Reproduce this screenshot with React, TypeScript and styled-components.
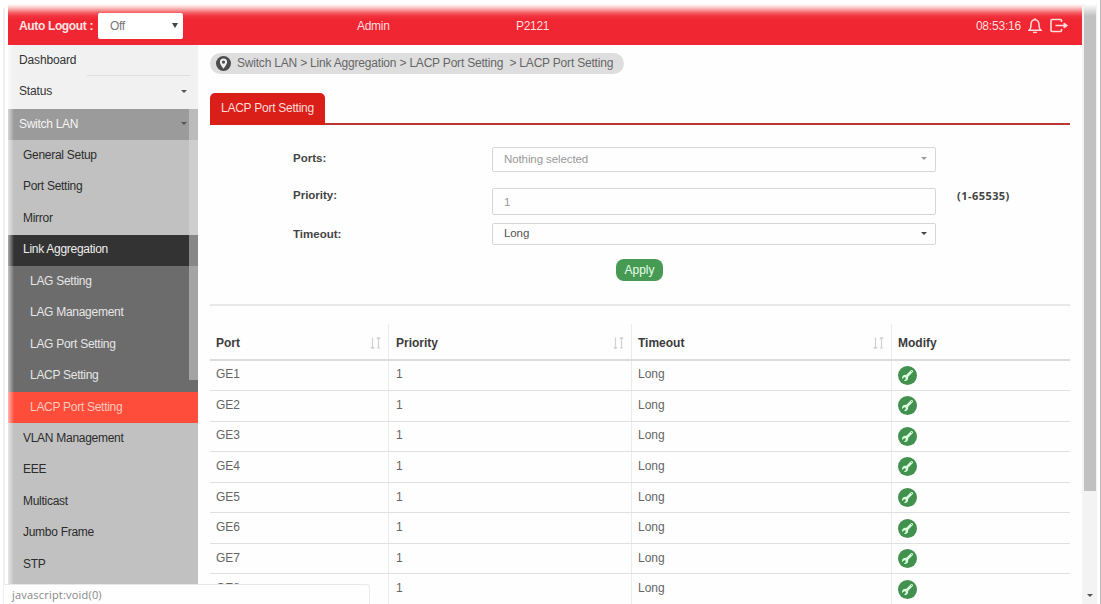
import React from 'react';
import styled, { createGlobalStyle } from 'styled-components';
import { FaWrench } from 'react-icons/fa';

const Global = createGlobalStyle`
  *, *::before, *::after { box-sizing: border-box; }
  html, body { margin: 0; padding: 0; background: #fefefe; overflow: hidden; }
  body { font-family: "Liberation Sans", Arial, sans-serif; font-size: 12.5px; color: #444; }
`;

const Page = styled.div`
  position: relative;
  display: flex;
  width: 1101px;
  height: 604px;
  padding: 4px 0 0 8px;
  overflow: hidden;
  border-right: 1px solid #bdbdbd;
`;

const Console = styled.div`
  display: flex;
  flex-direction: column;
  width: 1074px;
  flex: none;
`;

const Header = styled.header`
  display: grid;
  grid-template-columns: 338px 159px 1fr auto;
  align-items: center;
  height: 41px;
  flex: none;
  padding: 2px 13px 0 11px;
  color: #ffdede;
  background: linear-gradient(#fff 0, #fdd3d3 3px, #f9999c 6px, #f45b61 9px, #f1343f 12px, #f02632 16px, #f02632 100%);
`;

const Logout = styled.div`
  display: flex;
  align-items: center;
  font-weight: bold;
  font-size: 12px;
  letter-spacing: -0.35px;
  color: #ffe4e2;
`;

const HeaderText = styled.span<{ $spacing?: string }>`
  font-size: 12px;
  letter-spacing: ${(p) => p.$spacing ?? '-0.3px'};
`;

const OffSelect = styled.div`
  display: flex;
  align-items: center;
  justify-content: space-between;
  width: 85px;
  height: 26px;
  margin-left: 5px;
  padding: 0 5px 0 12px;
  border-radius: 2px;
  background: #fff;
  color: #777;
  font-weight: normal;
`;

const Caret = styled.i<{ $size: number; $color: string }>`
  width: 0;
  height: 0;
  border-left: ${(p) => p.$size}px solid transparent;
  border-right: ${(p) => p.$size}px solid transparent;
  border-top: ${(p) => p.$size + (p.$size > 3 ? 2 : 0)}px solid ${(p) => p.$color};
`;

const HeaderTools = styled.div`
  display: flex;
  align-items: center;
  gap: 7px;
`;

const Body = styled.div`
  display: flex;
  flex: 1;
  min-height: 0;
`;

const Sidebar = styled.nav`
  position: relative;
  width: 190px;
  flex: none;
  overflow: hidden;
  background: #c1c1c1;
`;

type Tone = 'top' | 'section' | 'item' | 'open' | 'child' | 'active';

const tones: Record<Tone, { bg: string; fg: string; indent: number }> = {
  top: { bg: '#f1f1f1', fg: '#333', indent: 11 },
  section: { bg: '#9b9b9b', fg: '#f4f4f4', indent: 11 },
  item: { bg: '#c1c1c1', fg: '#2c2c2c', indent: 15 },
  open: { bg: '#333333', fg: '#efefef', indent: 15 },
  child: { bg: '#6c6c6c', fg: '#e6e6e6', indent: 22 },
  active: { bg: '#ff4d3b', fg: '#ffc9bd', indent: 22 },
};

const NavRow = styled.div<{ $tone: Tone }>`
  display: flex;
  align-items: center;
  justify-content: space-between;
  height: 31.45px;
  padding: 0 11px 2px ${(p) => tones[p.$tone].indent}px;
  background: ${(p) => tones[p.$tone].bg};
  color: ${(p) => tones[p.$tone].fg};
  font-size: 12px;
  letter-spacing: ${(p) => (p.$tone === 'top' ? '-0.15px' : '-0.28px')};
  white-space: nowrap;
`;

const NavTop = styled.div`
  padding-bottom: 1px;
  background: #f1f1f1;
`;

const NavDivider = styled.div`
  height: 1px;
  margin: -1px 8px 0 79px;
  background: #dedede;
`;

const NavScroll = styled.div`
  position: absolute;
  top: 64px;
  right: 0;
  width: 9px;
  height: 271px;
  background: rgba(220, 220, 220, 0.5);
`;

const LeftFade = styled.div`
  position: absolute;
  top: 0;
  left: 0;
  width: 6px;
  height: 100%;
  background: linear-gradient(90deg, rgba(255, 255, 255, 0.6), rgba(255, 255, 255, 0));
`;

const Main = styled.main`
  flex: 1;
  min-width: 0;
  padding: 8px 12px 0;
  overflow: hidden;
`;

const Breadcrumb = styled.div`
  display: flex;
  align-items: center;
  width: 414px;
  height: 21px;
  padding: 0 6px 1px;
  border-radius: 11px;
  background: #dedede;
  color: #666;
  font-size: 12px;
  letter-spacing: -0.2px;
  white-space: pre;
`;

const PinIcon = styled.svg`
  width: 15px;
  height: 15px;
  margin-right: 6px;
  flex: none;
`;

const TabBar = styled.div`
  display: flex;
  height: 32px;
  margin-top: 19px;
  border-bottom: 2px solid #bd3534;
`;

const Tab = styled.div`
  display: flex;
  align-items: center;
  width: 115px;
  height: 32px;
  padding: 0 0 3px 11px;
  border-radius: 5px 5px 0 0;
  background: #da1f18;
  color: #ffdcd8;
  font-size: 12px;
  letter-spacing: -0.25px;
  white-space: nowrap;
`;

const Form = styled.div`
  padding: 22px 0 0 83px;
`;

const Field = styled.div<{ $gap: number }>`
  display: grid;
  grid-template-columns: 199px 444px auto;
  align-items: start;
  margin-bottom: ${(p) => p.$gap}px;
`;

const Label = styled.label<{ $top: number }>`
  padding-top: ${(p) => p.$top}px;
  color: #444;
  font-weight: bold;
  font-size: 11.5px;
  line-height: 14px;
`;

const Control = styled.div<{ $h: number; $muted?: boolean; $drop?: number }>`
  display: flex;
  align-items: center;
  justify-content: space-between;
  height: ${(p) => p.$h}px;
  padding: ${(p) => p.$drop ?? 0}px 8px ${(p) => (p.$drop ? 0 : 2)}px 11px;
  border: 1px solid #d6d6d6;
  border-radius: 2px;
  color: ${(p) => (p.$muted ? '#999' : '#555')};
  font-size: 11.5px;
  letter-spacing: -0.1px;
`;

const Range = styled.span`
  padding: 1px 0 0 21px;
  color: #444;
  font-family: "Open Sans", sans-serif;
  font-weight: bold;
  font-size: 11px;
  line-height: 14px;
  letter-spacing: 0.45px;
`;

const Apply = styled.button`
  display: block;
  width: 47px;
  height: 22px;
  margin: 14px 0 0 323px;
  padding: 0 0 1px;
  border: 0;
  border-radius: 8px;
  background: #479a53;
  color: #e8ffe8;
  font: 12px "Liberation Sans", Arial, sans-serif;
`;

const Rule = styled.hr`
  height: 2px;
  margin: 23px 0 18px;
  border: 0;
  background: #e8e8e8;
`;

const Row = styled.div<{ $head?: boolean }>`
  display: grid;
  grid-template-columns: 179px 243px 260px 1fr;
  height: ${(p) => (p.$head ? '36.5px' : '30.57px')};
  border-bottom: ${(p) => (p.$head ? '2px solid #dcdcdc' : '1px solid #e0e0e0')};
`;

const Cell = styled.div<{ $head?: boolean }>`
  display: flex;
  align-items: center;
  justify-content: space-between;
  padding: ${(p) => (p.$head ? '3px 7px 0 6px' : '0 7px 2px 6px')};
  border-right: 1px solid #ebebeb;
  color: ${(p) => (p.$head ? '#3c3c3c' : '#666')};
  font-weight: ${(p) => (p.$head ? 'bold' : 'normal')};
  font-size: 12px;
  &:nth-child(2) { padding-left: 7px; }
  &:last-child { border-right: 0; padding-bottom: 0; }
`;

const EditButton = styled.span`
  display: flex;
  align-items: center;
  justify-content: center;
  width: 19px;
  height: 19px;
  border-radius: 50%;
  background: #43914f;
  color: #d9ffdf;
`;

const Wrench = styled(FaWrench)`
  transform: rotate(180deg);
`;

const ScrollTrack = styled.div`
  display: flex;
  flex-direction: column;
  align-items: center;
  justify-content: space-between;
  width: 15px;
  flex: none;
  padding: 0 1px 7px 2px;
  background: #f3f3f3;
`;

const ScrollThumb = styled.div`
  width: 12px;
  height: 487px;
  background: linear-gradient(#fff, #c1c1c1 12px);
`;

const StatusBar = styled.div`
  position: absolute;
  left: 4px;
  bottom: 0;
  width: 366px;
  height: 20px;
  padding: 3px 0 0 8px;
  border: solid #e9e9e9;
  border-width: 1px 1px 0 0;
  border-radius: 0 4px 0 0;
  background: #fefefe;
  color: #888;
  font: 11px/14px "Open Sans", sans-serif;
  letter-spacing: 0.2px;
`;

const FrameLine = styled.div`
  position: absolute;
  left: 3px;
  top: 8px;
  bottom: 0;
  width: 2px;
  background: #efefef;
`;

const SortIcon = () => (
  <svg width="11" height="12" viewBox="0 0 11 12" fill="none" stroke="#d2d2d2" strokeWidth="1.2">
    <path d="M2.5 0.5v11M0.8 10.2l1.7 1.500 1.700-1.500M8.500 11.500v-11M6.800 1.800l1.700-1.500 1.700 1.500M7 11h3" />
  </svg>
);

const nav: { label: string; tone: Tone }[] = [
  { label: 'Switch LAN', tone: 'section' },
  { label: 'General Setup', tone: 'item' },
  { label: 'Port Setting', tone: 'item' },
  { label: 'Mirror', tone: 'item' },
  { label: 'Link Aggregation', tone: 'open' },
  { label: 'LAG Setting', tone: 'child' },
  { label: 'LAG Management', tone: 'child' },
  { label: 'LAG Port Setting', tone: 'child' },
  { label: 'LACP Setting', tone: 'child' },
  { label: 'LACP Port Setting', tone: 'active' },
  { label: 'VLAN Management', tone: 'item' },
  { label: 'EEE', tone: 'item' },
  { label: 'Multicast', tone: 'item' },
  { label: 'Jumbo Frame', tone: 'item' },
  { label: 'STP', tone: 'item' },
];

const ports = ['GE1', 'GE2', 'GE3', 'GE4', 'GE5', 'GE6', 'GE7', 'GE8'];
const columns = ['Port', 'Priority', 'Timeout', 'Modify'];

export default function App() {
  return (
    <>
      <Global />
      <Page>
        <Console>
          <Header>
            <Logout>
              Auto Logout :
              <OffSelect>
                Off
                <Caret $size={3.5} $color="#444" />
              </OffSelect>
            </Logout>
            <HeaderText>Admin</HeaderText>
            <HeaderText>P2121</HeaderText>
            <HeaderTools>
              <HeaderText $spacing="-0.2px">08:53:16</HeaderText>
              <svg width="14" height="17" viewBox="0 0 14 17" fill="none" stroke="#ffdcdc" strokeWidth="1.5">
                <path d="M7 1.2v1.6M1.2 13.2h11.6c-1.5-1.2-1.8-2.8-1.8-5.6C11 4.600 9.200 2.800 7 2.800S3 4.600 3 7.600c0 2.800-.3 4.400-1.800 5.600zM5.300 14.800c.6 1 2.800 1 3.400 0" />
              </svg>
              <svg width="20" height="15" viewBox="0 0 20 15" fill="none" stroke="#ffdcdc" strokeWidth="1.6">
                <path d="M12.500 4V2.500a1 1 0 0 0-1-1H3a1 1 0 0 0-1 1v10a1 1 0 0 0 1 1h8.500a1 1 0 0 0 1-1V11M6.500 7.500H17" />
                <path d="M15 5l3.500 2.500L15 10z" fill="#ffdcdc" strokeWidth="1" />
              </svg>
            </HeaderTools>
          </Header>
          <Body>
            <Sidebar>
              <NavTop>
                <NavRow $tone="top">Dashboard</NavRow>
                <NavDivider />
                <NavRow $tone="top">
                  Status
                  <Caret $size={3} $color="#555" />
                </NavRow>
              </NavTop>
              {nav.map((n) => (
                <NavRow key={n.label} $tone={n.tone}>
                  {n.label}
                  {n.tone === 'section' && <Caret $size={3} $color="#555" />}
                </NavRow>
              ))}
              <NavScroll />
              <LeftFade />
            </Sidebar>
            <Main>
              <Breadcrumb>
                <PinIcon viewBox="0 0 15 15">
                  <circle cx="7.500" cy="7.500" r="7.500" fill="#4c4c4c" />
                  <path d="M7.500 2.500a3.600 3.600 0 0 0-3.600 3.600c0 2.400 3.600 6.600 3.600 6.600s3.600-4.200 3.600-6.600a3.600 3.600 0 0 0-3.600-3.600z" fill="#eee" />
                  <circle cx="7.500" cy="6.100" r="1.600" fill="#4c4c4c" />
                </PinIcon>
                {'Switch LAN > Link Aggregation > LACP Port Setting  > LACP Port Setting'}
              </Breadcrumb>
              <TabBar>
                <Tab>LACP Port Setting</Tab>
              </TabBar>
              <Form>
                <Field $gap={16}>
                  <Label $top={4}>Ports:</Label>
                  <Control $h={25} $muted>
                    Nothing selected
                    <Caret $size={3} $color="#999" />
                  </Control>
                </Field>
                <Field $gap={8}>
                  <Label $top={0}>Priority:</Label>
                  <Control $h={27} $muted $drop={1}>1</Control>
                  <Range>(1-65535)</Range>
                </Field>
                <Field $gap={0}>
                  <Label $top={4}>Timeout:</Label>
                  <Control $h={22}>
                    Long
                    <Caret $size={3} $color="#444" />
                  </Control>
                </Field>
                <Apply>Apply</Apply>
              </Form>
              <Rule />
              <Row $head>
                {columns.map((c) => (
                  <Cell key={c} $head>
                    {c}
                    {c !== 'Modify' && <SortIcon />}
                  </Cell>
                ))}
              </Row>
              {ports.map((p) => (
                <Row key={p}>
                  <Cell>{p}</Cell>
                  <Cell>1</Cell>
                  <Cell>Long</Cell>
                  <Cell>
                    <EditButton>
                      <Wrench size={11} />
                    </EditButton>
                  </Cell>
                </Row>
              ))}
            </Main>
          </Body>
        </Console>
        <ScrollTrack>
          <ScrollThumb />
          <Caret $size={3} $color="#555" />
        </ScrollTrack>
        <FrameLine />
        <StatusBar>javascript:void(0)</StatusBar>
      </Page>
    </>
  );
}
